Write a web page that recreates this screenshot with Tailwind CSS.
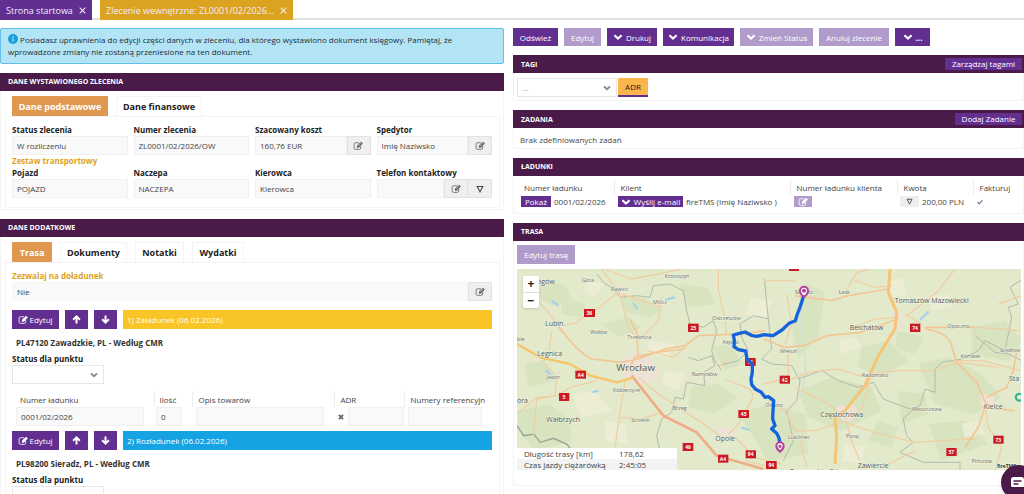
<!DOCTYPE html>
<html lang="pl">
<head>
    <meta charset="UTF-8">
    <meta name="viewport" content="width=device-width, initial-scale=1.0">
    <title>Zlecenie wewnętrzne</title>
    <script src="https://cdn.jsdelivr.net/npm/@tailwindcss/browser@4"></script>
</head>
<body class="bg-white font-['Open_Sans','Noto_Sans',sans-serif] text-[8px] leading-[13px] text-[#444] h-screen overflow-hidden">
    <!-- Icons -->
    <svg class="hidden">
        <symbol id="edit" viewBox="0 0 20 16">
            <path d="M14 9v3.5a2.500 2.500 0 0 1-2.500 2.500h-7A2.500 2.500 0 0 1 2 12.500v-7A2.500 2.500 0 0 1 4.500 3H11" fill="none" stroke="currentColor" stroke-width="1.500"/>
            <path d="M7 8.500 14.500 1 18 4.500 10.500 12H7z" fill="currentColor"/>
            <path d="m9 9 5.500-5.500" stroke="#fff" stroke-width=".8"/>
        </symbol>
        <symbol id="chevron" viewBox="0 0 16 10">
            <path d="m2 2 6 5.500L14 2" fill="none" stroke="currentColor" stroke-width="3.500"/>
        </symbol>
        <symbol id="arrow" viewBox="0 0 16 16">
            <path d="M8 15V3M2 8.500 8 2.500l6 6" fill="none" stroke="currentColor" stroke-width="3.500"/>
        </symbol>
        <symbol id="triangle" viewBox="0 0 14 14">
            <path d="M2 2.500h10L7 12z" fill="none" stroke="currentColor" stroke-width="1.800"/>
        </symbol>
        <symbol id="close" viewBox="0 0 10 10">
            <path d="m1 1 8 8M9 1 1 9" stroke="currentColor" stroke-width="1.500"/>
        </symbol>
    </svg>

    <!-- Open documents -->
    <nav class="flex gap-2 h-5 border-b-2 border-[#e2e2e2] text-[9px] text-[#f3ecf9] whitespace-nowrap">
        <div class="flex items-center justify-between w-[92px] h-5 px-1.5 bg-[#622f91]">
            <a href="#">Strona startowa</a>
            <button aria-label="Zamknij"><svg class="size-[7px]"><use href="#close"/></svg></button>
        </div>
        <div class="flex items-center justify-between w-[193px] h-5 px-1.5 bg-[#dca321]">
            <a href="#">Zlecenie wewnętrzne: ZL0001/02/2026...</a>
            <button aria-label="Zamknij"><svg class="size-[7px]"><use href="#close"/></svg></button>
        </div>
    </nav>

    <main class="grid grid-cols-[504fr_511fr] gap-[9px] pt-2 items-start">
        <!-- Left column -->
        <div class="flex flex-col gap-[9px] min-w-0">
            <div class="border border-[#62c0e8] rounded-xs bg-[#b2e4f5] px-[7px] py-[5px] leading-3 text-[#222d33]">
                <svg class="inline size-[10px] align-[-1px]" viewBox="0 0 10 10"><circle cx="5" cy="5" r="5" fill="#169fdc"/><path d="M5 4.200v3.500M5 2.200v1.200" stroke="#b2e4f5" stroke-width="1.300"/></svg>
                Posiadasz uprawnienia do edycji części danych w zleceniu, dla którego wystawiono dokument księgowy. Pamiętaj, że wprowadzone zmiany nie zostaną przeniesione na ten dokument.
            </div>

            <section>
                <h2 class="h-[18px] leading-[18px] px-2 bg-[#4a1b48] text-white text-[7px] font-bold">DANE WYSTAWIONEGO ZLECENIA</h2>
                <div class="border border-t-0 border-[#f4f4f4] pt-[5px] pl-1 pr-[3px] pb-px">
                    <div class="flex gap-2 pl-[7px] h-5 text-[9px] font-bold">
                        <button class="w-24 bg-[#e09850] text-white">Dane podstawowe</button>
                        <button class="w-[86px] border border-b-0 border-[#f4f4f4] text-[#222]">Dane finansowe</button>
                    </div>
                    <div class="border border-[#f4f4f4] pt-1.5 pl-1.5 pr-[7px] pb-[9px]">
                        <div class="grid grid-cols-4 gap-x-1.5">
                            <div>
                                <label for="status" class="block font-bold text-[#222]">Status zlecenia</label>
                                <input id="status" value="W rozliczeniu" readonly class="block w-full h-[19px] px-1 bg-[#f9f9f9] border border-[#f0f0f0]">
                            </div>
                            <div>
                                <label for="numer" class="block font-bold text-[#222]">Numer zlecenia</label>
                                <input id="numer" value="ZL0001/02/2026/OW" readonly class="block w-full h-[19px] px-1 bg-[#f9f9f9] border border-[#f0f0f0]">
                            </div>
                            <div>
                                <label for="koszt" class="block font-bold text-[#222]">Szacowany koszt</label>
                                <div class="flex h-[19px]">
                                    <input id="koszt" value="160,76 EUR" readonly class="flex-1 min-w-0 px-1 bg-[#f9f9f9] border border-[#f0f0f0]">
                                    <button aria-label="Edytuj koszt" class="w-6 grid place-items-center bg-[#efefef] border border-[#e2e2e2] text-[#666]"><svg class="w-[11px] h-[9px]"><use href="#edit"/></svg></button>
                                </div>
                            </div>
                            <div>
                                <label for="spedytor" class="block font-bold text-[#222]">Spedytor</label>
                                <div class="flex h-[19px]">
                                    <input id="spedytor" value="Imię Naziwsko" readonly class="flex-1 min-w-0 px-1 bg-[#f9f9f9] border border-[#f0f0f0]">
                                    <button aria-label="Edytuj spedytora" class="w-6 grid place-items-center bg-[#efefef] border border-[#e2e2e2] text-[#666]"><svg class="w-[11px] h-[9px]"><use href="#edit"/></svg></button>
                                </div>
                            </div>
                        </div>
                        <h3 class="leading-[11px] font-bold text-[#dca321]">Zestaw transportowy</h3>
                        <div class="grid grid-cols-4 gap-x-1.5">
                            <div>
                                <label for="pojazd" class="block font-bold text-[#222]">Pojazd</label>
                                <input id="pojazd" value="POJAZD" readonly class="block w-full h-[19px] px-1 bg-[#f9f9f9] border border-[#f0f0f0]">
                            </div>
                            <div>
                                <label for="naczepa" class="block font-bold text-[#222]">Naczepa</label>
                                <input id="naczepa" value="NACZEPA" readonly class="block w-full h-[19px] px-1 bg-[#f9f9f9] border border-[#f0f0f0]">
                            </div>
                            <div>
                                <label for="kierowca" class="block font-bold text-[#222]">Kierowca</label>
                                <input id="kierowca" value="Kierowca" readonly class="block w-full h-[19px] px-1 bg-[#f9f9f9] border border-[#f0f0f0]">
                            </div>
                            <div>
                                <label for="telefon" class="block font-bold text-[#222]">Telefon kontaktowy</label>
                                <div class="flex h-[19px]">
                                    <input id="telefon" readonly class="flex-1 min-w-0 px-1 bg-[#f9f9f9] border border-[#f0f0f0]">
                                    <button aria-label="Edytuj telefon" class="w-6 grid place-items-center bg-[#efefef] border border-[#e2e2e2] text-[#666]"><svg class="w-[11px] h-[9px]"><use href="#edit"/></svg></button>
                                    <button aria-label="Więcej" class="w-6 grid place-items-center bg-[#efefef] border border-l-0 border-[#e2e2e2]"><svg class="size-2"><use href="#triangle"/></svg></button>
                                </div>
                            </div>
                        </div>
                    </div>
                </div>
            </section>

            <section>
                <h2 class="h-[18px] leading-[18px] px-2 bg-[#4a1b48] text-white text-[7px] font-bold">DANE DODATKOWE</h2>
                <div class="border border-t-0 border-[#f4f4f4] pt-[5px] pl-1 pr-[3px] pb-px">
                    <div class="flex gap-2 pl-[7px] h-5 text-[9px] font-bold text-[#222]">
                        <button class="w-10 bg-[#e09850] text-white">Trasa</button>
                        <button class="w-[67px] border border-b-0 border-[#f4f4f4]">Dokumenty</button>
                        <button class="w-[49px] border border-b-0 border-[#f4f4f4]">Notatki</button>
                        <button class="w-[52px] border border-b-0 border-[#f4f4f4]">Wydatki</button>
                    </div>
                    <div class="border border-[#f4f4f4] pt-1.5 pl-1.5 pr-[7px] pb-[9px]">
                        <label for="doladunek" class="block font-bold text-[#dca321]">Zezwalaj na doładunek</label>
                        <div class="flex h-[19px]">
                            <input id="doladunek" value="Nie" readonly class="flex-1 min-w-0 px-1 bg-[#f9f9f9] border border-[#f7f7f7]">
                            <button aria-label="Edytuj doładunek" class="w-6 grid place-items-center bg-[#efefef] border border-[#e2e2e2] text-[#666]"><svg class="w-[11px] h-[9px]"><use href="#edit"/></svg></button>
                        </div>

                        <!-- Stop 1 -->
                        <div class="flex gap-1.5 h-[19px] mt-[9px] text-white">
                            <button class="flex items-center justify-center w-[47px] bg-[#622f91]"><svg class="w-[11px] h-[9px]"><use href="#edit"/></svg>Edytuj</button>
                            <button aria-label="W górę" class="grid place-items-center w-[23px] bg-[#622f91]"><svg class="size-[9px]"><use href="#arrow"/></svg></button>
                            <button aria-label="W dół" class="grid place-items-center w-[23px] bg-[#622f91]"><svg class="size-[9px] rotate-180"><use href="#arrow"/></svg></button>
                            <div class="flex-1 px-1 leading-[19px] bg-[#f9c425]">1) Załadunek (06.02.2026)</div>
                        </div>
                        <h3 class="mt-[7px] pl-1 font-bold text-[#333]">PL47120 Zawadzkie, PL - Według CMR</h3>
                        <label for="punkt1" class="block mt-[3px] font-bold text-[#222]">Status dla punktu</label>
                        <div class="relative w-[92px]">
                            <select id="punkt1" class="block appearance-none w-full h-[19px] px-1 border border-[#e6e6e6] bg-white"><option></option></select>
                            <svg class="absolute right-1.5 top-[7px] w-2 h-[6px] text-[#888] pointer-events-none"><use href="#chevron"/></svg>
                        </div>
                        <table class="table-fixed w-full mt-[7px]">
                            <colgroup>
                                <col class="w-[142px]"><col class="w-[38px]"><col class="w-[142px]"><col class="w-[70px]"><col>
                            </colgroup>
                            <thead>
                                <tr class="h-4 text-left whitespace-nowrap">
                                    <th class="p-0 pl-2 font-normal">Numer ładunku</th>
                                    <th class="p-0 pl-[5px] font-normal border-l border-[#eee]">Ilość</th>
                                    <th class="p-0 pl-[6px] font-normal border-l border-[#eee]">Opis towarów</th>
                                    <th class="p-0 pl-[6px] font-normal border-l border-[#eee]">ADR</th>
                                    <th class="p-0 pl-[6px] font-normal border-l border-[#eee]">Numery referencyjn</th>
                                </tr>
                            </thead>
                            <tbody>
                                <tr>
                                    <td class="p-0 pl-1 pr-2.5"><input aria-label="Numer ładunku" value="0001/02/2026" readonly class="block w-full h-[19px] px-1 bg-[#f9f9f9] border border-[#f0f0f0]"></td>
                                    <td class="p-0 pl-0.5 pr-2.5"><input aria-label="Ilość" value="0" readonly class="block w-full h-[19px] px-1 bg-[#f9f9f9] border border-[#f0f0f0]"></td>
                                    <td class="p-0 pl-1 pr-2.5"><input aria-label="Opis towarów" readonly class="block w-full h-[19px] px-1 bg-[#f9f9f9] border border-[#f0f0f0]"></td>
                                    <td class="p-0 pl-1">
                                        <div class="flex items-center gap-1">
                                            <svg class="size-[6px] shrink-0" viewBox="0 0 10 10"><path d="m1.500 1.500 7 7M8.500 1.500l-7 7" stroke="#666" stroke-width="3"/></svg>
                                            <input aria-label="ADR" readonly class="flex-1 min-w-0 h-[19px] px-1 bg-[#f9f9f9] border border-[#f0f0f0]">
                                        </div>
                                    </td>
                                    <td class="p-0 pl-1 pr-2.5"><input aria-label="Numery referencyjne" readonly class="block w-full h-[19px] px-1 bg-[#f9f9f9] border border-[#f0f0f0]"></td>
                                </tr>
                            </tbody>
                        </table>

                        <!-- Stop 2 -->
                        <div class="flex gap-1.5 h-[19px] mt-[5px] text-white">
                            <button class="flex items-center justify-center w-[47px] bg-[#622f91]"><svg class="w-[11px] h-[9px]"><use href="#edit"/></svg>Edytuj</button>
                            <button aria-label="W górę" class="grid place-items-center w-[23px] bg-[#622f91]"><svg class="size-[9px]"><use href="#arrow"/></svg></button>
                            <button aria-label="W dół" class="grid place-items-center w-[23px] bg-[#622f91]"><svg class="size-[9px] rotate-180"><use href="#arrow"/></svg></button>
                            <div class="flex-1 px-1 leading-[19px] bg-[#16a3e3]">2) Rozładunek (06.02.2026)</div>
                        </div>
                        <h3 class="mt-[7px] pl-1 font-bold text-[#333]">PL98200 Sieradz, PL - Według CMR</h3>
                        <label for="punkt2" class="block mt-[3px] font-bold text-[#222]">Status dla punktu</label>
                        <div class="relative w-[92px]">
                            <select id="punkt2" class="block appearance-none w-full h-[19px] px-1 border border-[#e6e6e6] bg-white"><option></option></select>
                        </div>
                    </div>
                </div>
            </section>
        </div>

        <!-- Right column -->
        <div class="flex flex-col gap-[9px] min-w-0">
            <div class="flex gap-1.5 h-[18px] text-white whitespace-nowrap">
                <button class="w-[45px] bg-[#622f91]">Odśwież</button>
                <button class="w-[37px] bg-[#b19bcb]">Edytuj</button>
                <button class="flex items-center justify-center gap-[3px] w-[50px] bg-[#622f91]"><svg class="w-[10px] h-[6px]"><use href="#chevron"/></svg>Drukuj</button>
                <button class="flex items-center justify-center gap-[3px] w-[71px] bg-[#622f91]"><svg class="w-[10px] h-[6px]"><use href="#chevron"/></svg>Komunikacja</button>
                <button class="flex items-center justify-center gap-[3px] w-[73px] bg-[#b19bcb]"><svg class="w-[10px] h-[6px]"><use href="#chevron"/></svg>Zmień Status</button>
                <button class="w-[70px] bg-[#b19bcb]">Anuluj zlecenie</button>
                <button class="flex items-center justify-center gap-[3px] w-[35px] bg-[#622f91] font-bold"><svg class="w-[10px] h-[6px]"><use href="#chevron"/></svg>...</button>
            </div>

            <section>
                <div class="flex items-center justify-between h-[18px] pl-2 pr-0.5 bg-[#4a1b48] text-white">
                    <h2 class="text-[7px] font-bold">TAGI</h2>
                    <button class="w-[77px] h-3 leading-3 bg-[#622f91]">Zarządzaj tagami</button>
                </div>
                <div class="flex gap-px border border-t-0 border-[#f4f4f4] pt-[5px] pb-[3px] px-[3px]">
                    <div class="relative w-[100px]">
                        <select aria-label="Tag" class="block appearance-none w-full h-[19px] px-1 border border-[#e6e6e6] bg-white text-[#999]"><option>...</option></select>
                        <svg class="absolute right-1.5 top-[7px] w-2 h-[6px] text-[#888] pointer-events-none"><use href="#chevron"/></svg>
                    </div>
                    <span class="w-[30px] h-[19px] leading-[17px] text-center bg-[#fbb54c] border-b-2 border-[#622f91] text-[#222]">ADR</span>
                </div>
            </section>

            <section>
                <div class="flex items-center justify-between h-[18px] pl-2 pr-0.5 bg-[#4a1b48] text-white">
                    <h2 class="text-[7px] font-bold">ZADANIA</h2>
                    <button class="w-[67px] h-3 leading-3 bg-[#622f91]">Dodaj Zadanie</button>
                </div>
                <p class="h-[21px] border border-t-0 border-[#f4f4f4] pt-[5px] pl-1.5">Brak zdefiniowanych zadań</p>
            </section>

            <section>
                <h2 class="h-[18px] leading-[18px] px-2 bg-[#4a1b48] text-white text-[7px] font-bold">ŁADUNKI</h2>
                <div class="border border-t-0 border-[#f4f4f4] pt-[3px] pb-[5px] pl-[3px]">
                    <table class="table-fixed w-full whitespace-nowrap">
                        <colgroup>
                            <col class="w-[97px]"><col class="w-[176px]"><col class="w-[107px]"><col class="w-[76px]"><col>
                        </colgroup>
                        <thead>
                            <tr class="h-4 text-left">
                                <th class="p-0 pl-[7px] font-normal">Numer ładunku</th>
                                <th class="p-0 pl-[6px] font-normal border-l border-[#eee]">Klient</th>
                                <th class="p-0 pl-[6px] font-normal border-l border-[#eee]">Numer ładunku klienta</th>
                                <th class="p-0 pl-[6px] font-normal border-l border-[#eee]">Kwota</th>
                                <th class="p-0 pl-[6px] font-normal border-l border-[#eee]">Fakturuj</th>
                            </tr>
                        </thead>
                        <tbody>
                            <tr>
                                <td class="p-0 pl-1"><div class="flex items-center gap-[3px]"><button class="w-[30px] h-[11px] leading-[11px] bg-[#622f91] text-white">Pokaż</button>0001/02/2026</div></td>
                                <td class="p-0 pl-1"><div class="flex items-center gap-[3px]"><button class="flex items-center justify-center gap-[3px] w-[65px] h-[11px] leading-[11px] bg-[#622f91] text-white"><svg class="w-[10px] h-[6px]"><use href="#chevron"/></svg>Wyślij e-mail</button>fireTMS (Imię Naziwsko )</div></td>
                                <td class="p-0 pl-1"><button aria-label="Edytuj numer" class="grid place-items-center w-[18px] h-[11px] bg-[#b19bcb] text-white"><svg class="w-[11px] h-[9px]"><use href="#edit"/></svg></button></td>
                                <td class="p-0 pl-[3px]"><div class="flex items-center gap-[3px]"><button aria-label="Waluta" class="grid place-items-center w-[19px] h-[11px] bg-[#eee]"><svg class="size-[7px]"><use href="#triangle"/></svg></button>200,00 PLN</div></td>
                                <td class="p-0 pl-1"><svg class="w-[6px] h-[6px]" viewBox="0 0 10 10"><path d="m1 5 3 3 5-6" fill="none" stroke="#85789b" stroke-width="2.200"/></svg></td>
                            </tr>
                        </tbody>
                    </table>
                </div>
            </section>

            <section>
                <h2 class="h-[18px] leading-[18px] px-2 bg-[#4a1b48] text-white text-[7px] font-bold">TRASA</h2>
                <div class="border border-t-0 border-[#f4f4f4] pt-1 pb-[15px] pl-[3px] pr-0.5">
                    <button class="block w-[58px] h-[19px] bg-[#b19bcb] text-white">Edytuj trasę</button>
                    <div class="relative mt-[5px]">
                        <svg class="block w-full h-[201px] font-['Open_Sans','Noto_Sans',sans-serif]" viewBox="36 15 1512 603" preserveAspectRatio="xMidYMid slice">
                            <rect x="0" y="0" width="1600" height="640" fill="#e3e9cb"/>
                            <!-- Forests -->
                            <g fill="#d3e2ba" opacity=".65">
                                <path d="m120 45 60 20 20 40-60 20-50-30zM345 95l70 5 60 40-50 20-70-20zM520 60l90 10 20 50-80 10zM40 440l90-20 60 40 10 70-110 30-50-60zM290 180l80-20 40 30-70 30zM170 100l70 20-10 40-60-10zM560 370l80-10 60 40-70 50-80-20zM700 450l90-30 110 30 10 120-120 20zM620 250l60-10 30 60-50 20zM60 300l60-10 30 60-80 20z"/>
                                <path d="m880 380 100-40 120 30 30 70-120 60-100-40zM900 60l60 20-20 140-60 60-20-90zM1070 250l80-20 60 60-80 50-70-30zM1240 300l90-20 100 50 60 70-80 50-120-30zM1400 190l100-20 50 60-40 60-110-20zM1180 380l80 10 10 60-80 30zM1270 480l110-10 70 70-140 50zM1120 470l60 20-20 60-70-20zM1180 200l80 20-30 50-60-20z"/>
                            </g>
                            <g fill="#efeed8" opacity=".8">
                                <path d="m200 390 70-10 50 60-90 20zM430 230l80 10-20 40-70-10zM250 50l50 10-30 40-40-20zM480 320l60 10-20 50-50-20zM300 470l60 10 10 60-70-10zM740 100l60 10-20 60-60-20zM1000 230l50-10 20 30-60 20zM1140 60l50-20 20 50-50 10zM1270 100l60-10 10 40-60 10zM1020 540l60 10-10 50-60-10zM1370 480l50-10 20 40-60 10z"/>
                            </g>
                            <g fill="#eee2d6">
                                <path d="m345 290 50-25 40 20 30 40-10 25-50 15-50-30zM990 430l50-10 30 30-50 30zM1425 390l40 5 5 40-40 5zM635 490l50 5 10 25-50 10zM1165 140l25 5-5 60-25-10zM325 65l35 5-5 30-30-10z"/>
                            </g>
                            <!-- Water -->
                            <path d="m140 110 20 15M480 108l30-8M262 385l18-5M708 490l25 8M1245 168l26-25M385 118l12 18M122 318l20 20" stroke="#9fd0ee" stroke-width="6" fill="none"/>
                            <path d="M905 60q-30 90-12 180 20 90-10 160" stroke="#cfe2d4" stroke-width="5" fill="none"/>
                            <!-- Borders -->
                            <g fill="none" stroke="#b3baab" stroke-width="3">
                                <path d="m275 30 20 25 30 20 20 25 50-5 40 5 10-35 50-5 40 20 10 60 10 40 40 10 30-20 10 30-15 60 10 30 20 30M550 280l30 10 40-15 10 30-35 20 5 40-55-10-10 50-25-5-10 45-30 20-15 50 10 50M640 305l60-15 30-30-20-40-5-40 40-25 45 10 10 90-30 30 30 15 60 5 25 45-10 60-30 30 20 90-30 60"/>
                                <path d="m790 165-12-120M880 345l70-25 50 30 60 20 45-15 30 50 80 30 30-10 15-50 30 10 0-70 20-20 60-10 50-25 20-30 60 30 20-100-10-30 30-10-25-50 30-20 40 10 30-25M1225 435l-30 30 10 50 20 20-40 30 70 30 110 0 0 30M1410 215l60 50 40 5 40 20" />
                            </g>
                            <path d="m36 485 20 30 30-5 20 25 40-12 40 18 20 25" fill="none" stroke="#98a396" stroke-width="4"/>
                            <!-- Minor roads -->
                            <g fill="none" stroke="#efcfa4" stroke-width="4">
                                <path d="M290 15 345 90 370 190 400 230M345 80l-75 60-50 30M300 15l80 30 80-15 70-15M350 90l120 40M470 100l-10 70-50 50M100 110l50 60 20 35M170 185l50 -10M140 205l-10 70-20 20M640 15v60l20 90 5 50M36 450l60-50 60-5 40-25 80-20M120 300l35 40-5 55-55 10-10 110M360 350l-20 130-10 70M345 460l60 5 70-20M400 340l60 50 60 40M510 430l20 10 60 35 60 45 40 0 60 60 80 20M745 400l-45 80-30 30M660 345l75 30 10 20M540 250l-35 30-80 -20M665 290l-25 20M720 590l60 15"/>
                                <path d="M870 50q-50 0-93 0M1020 85l35-60 40-10M1050 50l60 20 50-5M840 240l20-60-15-90M850 350l0-90M850 350l60-25 90-10 60 20 120-15 100 0 80-25 120 15M1180 160l-70 5-80 30M1200 160l100-80 50-65M1250 180l-50-30M870 370l100 50 30 25M1000 470l110 35 120 30 160 -10 20 0M870 500l60 0 60-20M870 500l-30-60-50-30M885 520l20 90M1025 470l10 50 30 70M1345 290l90 0 110 30M1440 430l10 60 40 60-20 70M1150 600l80-40M1415 190l130 10M1480 120l70-25M1100 335l-30 100-50 30M777 360l60-15"/>
                            </g>
                            <!-- Main roads -->
                            <g fill="none" stroke="#f3c795" stroke-width="5">
                                <path d="M150 170q60 90 110 115l90 10 50-10M400 285l-5-80-20-40M400 285l80-30 60-10 40-30 130-5 70-10M370 320l20-40 60-15 90-10"/>
                                <path d="M777 225l60 25 60-5 70-30 100-10 110-40M1260 195q70 10 80 50l15 50 60 60 30 70M1440 430l-20 60-40 60M1445 400l60-30 20-50 10-60M1260 190l150 0M870 95l110 15 50-15 120-20M1430 430l100 10"/>
                            </g>
                            <path d="m380 335 95 120 100 50 60 70 140 40" fill="none" stroke="#efad85" stroke-width="8"/>
                            <path d="m36 240 70 40 90 20 60 35 80 20 50-15" fill="none" stroke="#f7c467" stroke-width="7"/>
                            <path d="m1155 15-5 70 25 60-5 50-50 80-40 90-60 75-30 20 5 60-5 80" fill="none" stroke="#f5c474" stroke-width="9"/>

                            <!-- Place names -->
                            <g fill="#666b66" stroke="#f0f3df" stroke-width="3" paint-order="stroke" class="text-[16px]">
                                <text x="230" y="53">Góra</text>
                                <text x="318" y="82">Rawicz</text>
                                <text x="479" y="42">Krotoszyn</text>
                                <text x="444" y="121">Milicz</text>
                                <text x="256" y="210">Wołów</text>
                                <text x="367" y="226">Trzebnica</text>
                                <text x="621" y="168">Ostrzeszów</text>
                                <text x="653" y="239">Kępno</text>
                                <text x="560" y="336">Namysłów</text>
                                <text x="124" y="346">Jawor</text>
                                <text x="324" y="385">Kobierzyce</text>
                                <text x="503" y="437">Brzeg</text>
                                <text x="379" y="473">Strzelin</text>
                                <text x="36" y="231">ble</text>
                                <text x="870" y="90">Sieradz</text>
                                <text x="1001" y="90">Łask</text>
                                <text x="1327" y="193">Opoczno</text>
                                <text x="825" y="267">Wieluń</text>
                                <text x="1367" y="281">Końskie</text>
                                <text x="1485" y="265">Szydłow</text>
                                <text x="1070" y="338">Radomsko</text>
                                <text x="1220" y="440">Włoszczowa</text>
                                <text x="781" y="428">Olesno</text>
                                <text x="849" y="524">Lubliniec</text>
                                <text x="1023" y="522">Poraj</text>
                                <text x="1400" y="596">Pińczów</text>
                            </g>
                            <g fill="#555a55" stroke="#f0f3df" stroke-width="3" paint-order="stroke" class="text-[21px]">
                                <text x="96" y="59">ogów</text>
                                <text x="120" y="185">Lubin</text>
                                <text x="97" y="277">Legnica</text>
                                <text x="36" y="418">óra</text>
                                <text x="124" y="474">Wałbrzych</text>
                                <text x="631" y="530">Opole</text>
                                <text x="1169" y="118">Tomaszów Mazowiecki</text>
                                <text x="1034" y="198">Bełchatów</text>
                                <text x="1512" y="350">Sta</text>
                                <text x="1436" y="434">Kielce</text>
                                <text x="946" y="460">Częstochowa</text>
                                <text x="1058" y="612">Zawiercie</text>
                                <text x="855" y="630">Tarnowskie Góry</text>
                            </g>
                            <text x="334" y="322" fill="#505550" stroke="#f0f3df" stroke-width="3" paint-order="stroke" class="text-[29px]">Wrocław</text>

                            <!-- Road numbers -->
                            <g fill="#cb1a22">
                                <rect x="237" y="135" width="33" height="24"/><rect x="549" y="179" width="32" height="25"/><rect x="211" y="320" width="32" height="24"/><rect x="162" y="387" width="31" height="24"/>
                                <rect x="700" y="438" width="32" height="24"/><rect x="533" y="537" width="32" height="24"/><rect x="639" y="572" width="31" height="24"/><rect x="722" y="559" width="31" height="24"/>
                                <rect x="720" y="282" width="32" height="24"/><rect x="852" y="-4" width="30" height="25"/><rect x="1215" y="179" width="31" height="25"/><rect x="824" y="335" width="31" height="24"/>
                                <rect x="783" y="591" width="32" height="24"/><rect x="1324" y="552" width="31" height="24"/><rect x="1465" y="515" width="31" height="24"/>
                            </g>
                            <g fill="#fff" text-anchor="middle" class="text-[15px] font-bold">
                                <text x="253" y="153">36</text><text x="565" y="197">25</text><text x="227" y="338">A4</text><text x="177" y="405">5</text>
                                <text x="716" y="456">45</text><text x="549" y="555">46</text><text x="654" y="590">A4</text><text x="737" y="577">94</text>
                                <text x="736" y="300">11</text><text x="1230" y="197">74</text><text x="839" y="353">42</text>
                                <text x="799" y="609">94</text><text x="1339" y="570">57</text><text x="1480" y="533">73</text>
                            </g>

                            <!-- Route -->
                            <path d="M897 92 885 130 877 150 871 170 852 178 831 198 804 215 777 212 755 217 739 214 720 204 700 209 685 213 688 228 687 248 700 257 722 261 726 285 742 300 742 325 738 345 740 362 752 376 768 384 780 400 790 398 806 410 804 440 803 465 810 485 800 495 815 508 822 522 825 540" fill="none" stroke="#1563dc" stroke-width="10" stroke-linejoin="round"/>
                            <g fill="#fff" stroke="#b4419a" stroke-width="6">
                                <path d="M897 98q-12-8-12-18a12 12 0 0 1 24 0q0 10-12 18zM825 563q-11-8-11-17a11 11 0 0 1 22 0q0 9-11 17z"/>
                                <circle cx="897" cy="80" r="3"/><circle cx="825" cy="547" r="2"/>
                            </g>
                            <path d="M1548 391a10 10 0 1 0 0 17" fill="none" stroke="#2fb48f" stroke-width="6"/>
                            <text x="1476" y="611" fill="#333" stroke="#f4f6e6" stroke-width="4" paint-order="stroke" class="text-[15px] font-bold">fireTMS</text>
                        </svg>
                        <div class="absolute left-1.5 top-[7px] flex flex-col w-4 h-8 rounded-xs bg-white text-[#222] shadow-sm text-xs font-bold">
                            <button class="flex-1 leading-4 border-b border-[#ddd]">+</button>
                            <button class="flex-1 leading-4">−</button>
                        </div>
                        <table class="absolute left-0 bottom-0 w-40 bg-white leading-[11px]">
                            <tr><td class="p-0 pl-[7px] w-[102px]">Długość trasy [km]</td><td class="p-0">178,62</td></tr>
                            <tr class="bg-[#f3f3f3]"><td class="p-0 pl-[7px]">Czas jazdy ciężarówką</td><td class="p-0">2:45:05</td></tr>
                        </table>
                    </div>
                </div>
            </section>
        </div>
    </main>

    <button aria-label="Czat" class="fixed -right-3 -bottom-[6px] size-[35px] rounded-full bg-[#4a1b48] shadow-md">
        <svg class="absolute left-2.5 top-3 w-[13px] h-[11px]" viewBox="0 0 26 22"><path d="M5 0h16q5 0 5 5v15H3q-3 0-3-3V5q0-5 5-5z" fill="#fff"/><path d="M5 8h16M5 14h10" stroke="#4a1b48" stroke-width="3"/></svg>
    </button>
</body>
</html>
